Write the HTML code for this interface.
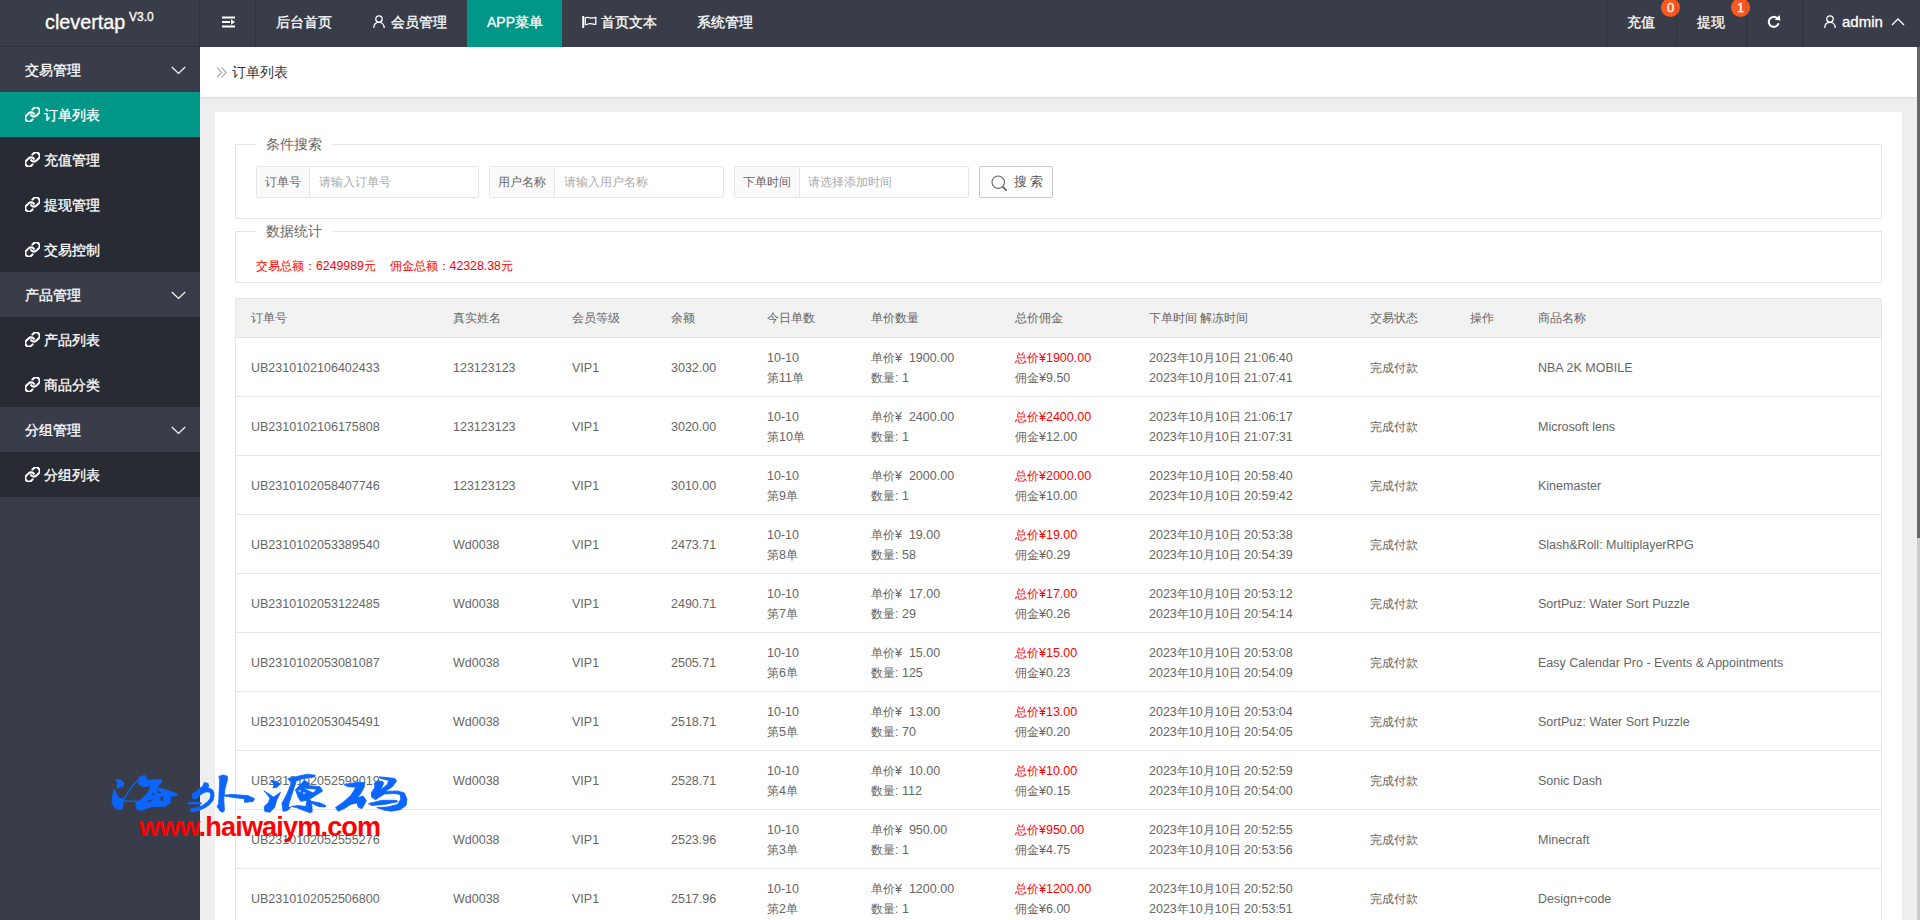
<!DOCTYPE html>
<html><head><meta charset="utf-8">
<style>
*{margin:0;padding:0;box-sizing:border-box}
html,body{width:1920px;height:920px;overflow:hidden;background:#eee;font-family:"Liberation Sans",sans-serif;}
.abs{position:absolute}
svg{display:block}
#hdr{position:absolute;left:0;top:0;width:1920px;height:47px;background:#393D49;color:#fff;font-size:14px;-webkit-text-stroke:0.3px #fff}
#hdr .t{position:absolute;top:0;line-height:45px;white-space:nowrap}
#hdr .sep{position:absolute;top:0;width:1px;height:47px;background:rgba(0,0,0,.15)}
#hdr .ic{position:absolute}
#logo{position:absolute;left:0;top:0;width:200px;height:47px;border-bottom:1px solid #30343e}
#logo .n{position:absolute;left:45px;top:8.5px;font-size:19.8px;line-height:26px;color:#fff}
#logo .v{position:absolute;left:129px;top:10px;font-size:12px;line-height:14px;color:#fff}
.badge{position:absolute;top:-2px;width:19px;height:19px;border-radius:50%;background:#FF5722;color:#fff;font-size:13px;line-height:20.5px;text-align:center}
#side{position:absolute;left:0;top:47px;width:200px;height:873px;background:#393D49;color:#fff;font-size:14px;-webkit-text-stroke:0.3px #fff}
#side .g{position:absolute;left:0;width:200px;height:45px;line-height:46px;padding-left:25px}
#side .c{position:absolute;left:0;width:200px;height:45px;line-height:47px;padding-left:44px;background:#282B33}
#side .on{background:#009688}
#side .lk{position:absolute;left:24.5px;top:14.5px}
#side .chev{position:absolute;left:170.5px;top:19px}
#crumb{position:absolute;left:200px;top:47px;width:1717px;height:50px;background:#fff;box-shadow:0 1px 2px rgba(0,0,0,.10)}
#crumb .t{position:absolute;left:32px;top:0;line-height:50px;font-size:14px;color:#333}
#crumb .ic{position:absolute;left:15.5px;top:20px}
#card{position:absolute;left:215px;top:112px;width:1687px;height:820px;background:#fff;box-shadow:0 1px 2px 0 rgba(0,0,0,.05)}
.fs{position:absolute;border:1px solid #e6e6e6}
.lg{position:absolute;background:#fff;padding:0 10px;font-size:14px;color:#666;line-height:20px}
.ig{position:absolute;height:32px;border:1px solid #e6e6e6;border-radius:2px;background:#fff}
.ig .lb{position:absolute;left:0;top:0;height:30px;background:#fafafa;border-right:1px solid #e6e6e6;font-size:12px;color:#666;line-height:31px;padding-left:8px}
.ig .ph{position:absolute;top:0;line-height:31px;font-size:12px;color:#aaa}
.btn{position:absolute;left:979px;top:166px;width:74px;height:32px;border:1px solid #c9c9c9;border-radius:2px;background:#fff;font-size:12.5px;color:#555}
.red{color:#f00}
.th{position:absolute;background:#f2f2f2;border-top:1px solid #e6e6e6;border-bottom:1px solid #e6e6e6}
.tc{position:absolute;font-size:12.5px;line-height:20px;color:#666;white-space:nowrap}
.z{font-size:12px}
#sb{position:absolute;left:1917px;top:47px;width:3px;height:873px;background:#cbcbcb}
#sbt{position:absolute;left:1917px;top:47px;width:3px;height:491px;background:#666}
#wm1{position:absolute;left:139px;top:810px;font-size:27px;letter-spacing:-0.8px;font-weight:bold;color:#f00;line-height:34px;white-space:nowrap}
</style></head>
<body>
<div id="hdr">
  <div id="logo"><div class="n">clevertap</div><div class="v">V3.0</div></div>
  <div class="sep" style="left:199px"></div>
  <div class="ic" style="left:222px;top:16px"><svg width="14" height="12" viewBox="0 0 14 12"><g fill="#fff"><rect x="0" y="0.5" width="13" height="2"/><rect x="0" y="5" width="8" height="2"/><path d="M9 3.3 L13 6 L9 8.7 Z"/><rect x="0" y="9.5" width="13" height="2"/></g></svg></div>
  <div class="sep" style="left:255px"></div>
  <div class="t" style="left:276px">后台首页</div>
  <div class="ic" style="left:373px;top:15px"><svg width="12" height="13" viewBox="0 0 12 13"><g fill="none" stroke="#fff" stroke-width="1.3"><circle cx="6" cy="4" r="3.2"/><path d="M0.8 13 C0.8 9.5 3 7.4 6 7.4 C9 7.4 11.2 9.5 11.2 13"/></g></svg></div>
  <div class="t" style="left:391px">会员管理</div>
  <div class="abs" style="left:467px;top:0;width:95px;height:47px;background:#009688"></div>
  <div class="t" style="left:487px">APP菜单</div>
  <div class="ic" style="left:582px;top:16px"><svg width="15" height="12" viewBox="0 0 15 12"><g fill="none" stroke="#fff"><path d="M1.2 0 V12" stroke-width="2"/><path d="M3.3 1.8 C6 0.2 8 3 10.5 1.8 L13.8 1.4 V8.2 C11 9.2 8.5 6.5 6 8 C5 8.6 4 8.6 3.3 8.6 Z" stroke-width="1.3"/></g></svg></div>
  <div class="t" style="left:601px">首页文本</div>
  <div class="t" style="left:697px">系统管理</div>
  <div class="sep" style="left:1606px"></div>
  <div class="t" style="left:1627px">充值</div>
  <div class="badge" style="left:1661px">0</div>
  <div class="sep" style="left:1676px"></div>
  <div class="t" style="left:1697px">提现</div>
  <div class="badge" style="left:1731px">1</div>
  <div class="sep" style="left:1746px"></div>
  <div class="ic" style="left:1767px;top:15px"><svg width="14" height="14" viewBox="0 0 14 14"><g fill="none" stroke="#fff" stroke-width="2"><path d="M11.6 8.2 A5 5 0 1 1 10.2 3.2"/></g><path d="M7.6 4.8 L13.4 5.6 L12.6 0 Z" fill="#fff"/></svg></div>
  <div class="sep" style="left:1802px"></div>
  <div class="ic" style="left:1824px;top:15px"><svg width="12" height="13" viewBox="0 0 12 13"><g fill="none" stroke="#fff" stroke-width="1.3"><circle cx="6" cy="4" r="3.2"/><path d="M0.8 13 C0.8 9.5 3 7.4 6 7.4 C9 7.4 11.2 9.5 11.2 13"/></g></svg></div>
  <div class="t" style="left:1842px;top:-1px;font-size:15px">admin</div>
  <div class="ic" style="left:1891px;top:18px"><svg width="14" height="8" viewBox="0 0 14 8"><path d="M1 7 L7 1 L13 7" fill="none" stroke="#fff" stroke-width="1.3"/></svg></div>
</div>
<div id="side">
<div class="g" style="top:0px">交易管理<span class="chev"><svg width="15" height="9" viewBox="0 0 15 9"><path d="M0.8 1 L7.5 7.5 L14.2 1" fill="none" stroke="#fff" stroke-width="1.15"/></svg></span></div>
<div class="c on" style="top:45px"><span class="lk"><svg width="15" height="15" viewBox="1.5 1.5 21 21"><g fill="none" stroke="#fff" stroke-width="2.9" stroke-linecap="round"><path d="M10 13a5 5 0 0 0 7.54.54l3-3a5 5 0 0 0-7.07-7.07l-1.72 1.71"/><path d="M14 11a5 5 0 0 0-7.54-.54l-3 3a5 5 0 0 0 7.07 7.07l1.71-1.71"/></g></svg></span>订单列表</div>
<div class="c" style="top:90px"><span class="lk"><svg width="15" height="15" viewBox="1.5 1.5 21 21"><g fill="none" stroke="#fff" stroke-width="2.9" stroke-linecap="round"><path d="M10 13a5 5 0 0 0 7.54.54l3-3a5 5 0 0 0-7.07-7.07l-1.72 1.71"/><path d="M14 11a5 5 0 0 0-7.54-.54l-3 3a5 5 0 0 0 7.07 7.07l1.71-1.71"/></g></svg></span>充值管理</div>
<div class="c" style="top:135px"><span class="lk"><svg width="15" height="15" viewBox="1.5 1.5 21 21"><g fill="none" stroke="#fff" stroke-width="2.9" stroke-linecap="round"><path d="M10 13a5 5 0 0 0 7.54.54l3-3a5 5 0 0 0-7.07-7.07l-1.72 1.71"/><path d="M14 11a5 5 0 0 0-7.54-.54l-3 3a5 5 0 0 0 7.07 7.07l1.71-1.71"/></g></svg></span>提现管理</div>
<div class="c" style="top:180px"><span class="lk"><svg width="15" height="15" viewBox="1.5 1.5 21 21"><g fill="none" stroke="#fff" stroke-width="2.9" stroke-linecap="round"><path d="M10 13a5 5 0 0 0 7.54.54l3-3a5 5 0 0 0-7.07-7.07l-1.72 1.71"/><path d="M14 11a5 5 0 0 0-7.54-.54l-3 3a5 5 0 0 0 7.07 7.07l1.71-1.71"/></g></svg></span>交易控制</div>
<div class="g" style="top:225px">产品管理<span class="chev"><svg width="15" height="9" viewBox="0 0 15 9"><path d="M0.8 1 L7.5 7.5 L14.2 1" fill="none" stroke="#fff" stroke-width="1.15"/></svg></span></div>
<div class="c" style="top:270px"><span class="lk"><svg width="15" height="15" viewBox="1.5 1.5 21 21"><g fill="none" stroke="#fff" stroke-width="2.9" stroke-linecap="round"><path d="M10 13a5 5 0 0 0 7.54.54l3-3a5 5 0 0 0-7.07-7.07l-1.72 1.71"/><path d="M14 11a5 5 0 0 0-7.54-.54l-3 3a5 5 0 0 0 7.07 7.07l1.71-1.71"/></g></svg></span>产品列表</div>
<div class="c" style="top:315px"><span class="lk"><svg width="15" height="15" viewBox="1.5 1.5 21 21"><g fill="none" stroke="#fff" stroke-width="2.9" stroke-linecap="round"><path d="M10 13a5 5 0 0 0 7.54.54l3-3a5 5 0 0 0-7.07-7.07l-1.72 1.71"/><path d="M14 11a5 5 0 0 0-7.54-.54l-3 3a5 5 0 0 0 7.07 7.07l1.71-1.71"/></g></svg></span>商品分类</div>
<div class="g" style="top:360px">分组管理<span class="chev"><svg width="15" height="9" viewBox="0 0 15 9"><path d="M0.8 1 L7.5 7.5 L14.2 1" fill="none" stroke="#fff" stroke-width="1.15"/></svg></span></div>
<div class="c" style="top:405px"><span class="lk"><svg width="15" height="15" viewBox="1.5 1.5 21 21"><g fill="none" stroke="#fff" stroke-width="2.9" stroke-linecap="round"><path d="M10 13a5 5 0 0 0 7.54.54l3-3a5 5 0 0 0-7.07-7.07l-1.72 1.71"/><path d="M14 11a5 5 0 0 0-7.54-.54l-3 3a5 5 0 0 0 7.07 7.07l1.71-1.71"/></g></svg></span>分组列表</div>
</div>
<div id="crumb">
  <div class="ic"><svg width="12" height="11" viewBox="0 0 12 11"><g fill="none" stroke="#999" stroke-width="1.1"><path d="M1 0.5 L5.5 5.5 L1 10.5"/><path d="M5.5 0.5 L10 5.5 L5.5 10.5"/></g></svg></div>
  <div class="t">订单列表</div>
</div>
<div id="card"></div>
<!-- search fieldset -->
<div class="fs" style="left:235px;top:144px;width:1647px;height:75px"></div>
<div class="lg" style="left:256px;top:134px">条件搜索</div>
<div class="ig" style="left:256px;top:166px;width:223px"><div class="lb" style="width:53px">订单号</div><div class="ph" style="left:62px">请输入订单号</div></div>
<div class="ig" style="left:489px;top:166px;width:235px"><div class="lb" style="width:65px">用户名称</div><div class="ph" style="left:74px">请输入用户名称</div></div>
<div class="ig" style="left:734px;top:166px;width:235px"><div class="lb" style="width:65px">下单时间</div><div class="ph" style="left:73px">请选择添加时间</div></div>
<div class="btn"><div class="abs" style="left:11px;top:8px"><svg width="17" height="17" viewBox="0 0 17 17"><g fill="none" stroke="#666" stroke-width="1.1"><circle cx="7.2" cy="7.2" r="6.2"/><path d="M11.8 11.8 L15.2 15.2" stroke-width="1.7" stroke-linecap="round"/></g></svg></div><div class="abs" style="left:34px;top:0;line-height:31px">搜&nbsp;索</div></div>
<!-- stats fieldset -->
<div class="fs" style="left:235px;top:231px;width:1647px;height:52px"></div>
<div class="lg" style="left:256px;top:221px">数据统计</div>
<div class="abs red" style="left:256px;top:255.5px;font-size:12.3px;line-height:20px;white-space:nowrap">交易总额：6249989元&nbsp;&nbsp;&nbsp;&nbsp;佣金总额：42328.38元</div>
<!-- table -->
<div class="th" style="left:235px;top:298px;width:1647px;height:40px"></div>
<div class="tc" style="left:251px;top:308px"><span class="z">订单号</span></div>
<div class="tc" style="left:453px;top:308px"><span class="z">真实姓名</span></div>
<div class="tc" style="left:572px;top:308px"><span class="z">会员等级</span></div>
<div class="tc" style="left:671px;top:308px"><span class="z">余额</span></div>
<div class="tc" style="left:767px;top:308px"><span class="z">今日单数</span></div>
<div class="tc" style="left:871px;top:308px"><span class="z">单价数量</span></div>
<div class="tc" style="left:1015px;top:308px"><span class="z">总价佣金</span></div>
<div class="tc" style="left:1149px;top:308px"><span class="z">下单时间</span> <span class="z">解冻时间</span></div>
<div class="tc" style="left:1370px;top:308px"><span class="z">交易状态</span></div>
<div class="tc" style="left:1470px;top:308px"><span class="z">操作</span></div>
<div class="tc" style="left:1538px;top:308px"><span class="z">商品名称</span></div>
<div class="abs" style="left:235px;top:298px;width:1px;height:640px;background:#e6e6e6"></div>
<div class="abs" style="left:1881px;top:298px;width:1px;height:640px;background:#e6e6e6"></div>
<div class="abs" style="left:235px;top:396px;width:1647px;height:1px;background:#e6e6e6"></div>
<div class="tc" style="left:251px;top:358px">UB2310102106402433</div>
<div class="tc" style="left:453px;top:358px">123123123</div>
<div class="tc" style="left:572px;top:358px">VIP1</div>
<div class="tc" style="left:671px;top:358px">3032.00</div>
<div class="tc" style="left:767px;top:348px">10-10<br><span class="z">第</span>11<span class="z">单</span></div>
<div class="tc" style="left:871px;top:348px"><span class="z">单价</span>¥&nbsp; 1900.00<br><span class="z">数量</span>: 1</div>
<div class="tc" style="left:1015px;top:348px"><span class="red"><span class="z">总价</span>¥1900.00</span><br><span class="z">佣金</span>¥9.50</div>
<div class="tc" style="left:1149px;top:348px">2023<span class="z">年</span>10<span class="z">月</span>10<span class="z">日</span> 21:06:40<br>2023<span class="z">年</span>10<span class="z">月</span>10<span class="z">日</span> 21:07:41</div>
<div class="tc" style="left:1370px;top:358px"><span class="z">完成付款</span></div>
<div class="tc" style="left:1538px;top:358px">NBA 2K MOBILE</div>
<div class="abs" style="left:235px;top:455px;width:1647px;height:1px;background:#e6e6e6"></div>
<div class="tc" style="left:251px;top:417px">UB2310102106175808</div>
<div class="tc" style="left:453px;top:417px">123123123</div>
<div class="tc" style="left:572px;top:417px">VIP1</div>
<div class="tc" style="left:671px;top:417px">3020.00</div>
<div class="tc" style="left:767px;top:407px">10-10<br><span class="z">第</span>10<span class="z">单</span></div>
<div class="tc" style="left:871px;top:407px"><span class="z">单价</span>¥&nbsp; 2400.00<br><span class="z">数量</span>: 1</div>
<div class="tc" style="left:1015px;top:407px"><span class="red"><span class="z">总价</span>¥2400.00</span><br><span class="z">佣金</span>¥12.00</div>
<div class="tc" style="left:1149px;top:407px">2023<span class="z">年</span>10<span class="z">月</span>10<span class="z">日</span> 21:06:17<br>2023<span class="z">年</span>10<span class="z">月</span>10<span class="z">日</span> 21:07:31</div>
<div class="tc" style="left:1370px;top:417px"><span class="z">完成付款</span></div>
<div class="tc" style="left:1538px;top:417px">Microsoft lens</div>
<div class="abs" style="left:235px;top:514px;width:1647px;height:1px;background:#e6e6e6"></div>
<div class="tc" style="left:251px;top:476px">UB2310102058407746</div>
<div class="tc" style="left:453px;top:476px">123123123</div>
<div class="tc" style="left:572px;top:476px">VIP1</div>
<div class="tc" style="left:671px;top:476px">3010.00</div>
<div class="tc" style="left:767px;top:466px">10-10<br><span class="z">第</span>9<span class="z">单</span></div>
<div class="tc" style="left:871px;top:466px"><span class="z">单价</span>¥&nbsp; 2000.00<br><span class="z">数量</span>: 1</div>
<div class="tc" style="left:1015px;top:466px"><span class="red"><span class="z">总价</span>¥2000.00</span><br><span class="z">佣金</span>¥10.00</div>
<div class="tc" style="left:1149px;top:466px">2023<span class="z">年</span>10<span class="z">月</span>10<span class="z">日</span> 20:58:40<br>2023<span class="z">年</span>10<span class="z">月</span>10<span class="z">日</span> 20:59:42</div>
<div class="tc" style="left:1370px;top:476px"><span class="z">完成付款</span></div>
<div class="tc" style="left:1538px;top:476px">Kinemaster</div>
<div class="abs" style="left:235px;top:573px;width:1647px;height:1px;background:#e6e6e6"></div>
<div class="tc" style="left:251px;top:535px">UB2310102053389540</div>
<div class="tc" style="left:453px;top:535px">Wd0038</div>
<div class="tc" style="left:572px;top:535px">VIP1</div>
<div class="tc" style="left:671px;top:535px">2473.71</div>
<div class="tc" style="left:767px;top:525px">10-10<br><span class="z">第</span>8<span class="z">单</span></div>
<div class="tc" style="left:871px;top:525px"><span class="z">单价</span>¥&nbsp; 19.00<br><span class="z">数量</span>: 58</div>
<div class="tc" style="left:1015px;top:525px"><span class="red"><span class="z">总价</span>¥19.00</span><br><span class="z">佣金</span>¥0.29</div>
<div class="tc" style="left:1149px;top:525px">2023<span class="z">年</span>10<span class="z">月</span>10<span class="z">日</span> 20:53:38<br>2023<span class="z">年</span>10<span class="z">月</span>10<span class="z">日</span> 20:54:39</div>
<div class="tc" style="left:1370px;top:535px"><span class="z">完成付款</span></div>
<div class="tc" style="left:1538px;top:535px">Slash&amp;Roll: MultiplayerRPG</div>
<div class="abs" style="left:235px;top:632px;width:1647px;height:1px;background:#e6e6e6"></div>
<div class="tc" style="left:251px;top:594px">UB2310102053122485</div>
<div class="tc" style="left:453px;top:594px">Wd0038</div>
<div class="tc" style="left:572px;top:594px">VIP1</div>
<div class="tc" style="left:671px;top:594px">2490.71</div>
<div class="tc" style="left:767px;top:584px">10-10<br><span class="z">第</span>7<span class="z">单</span></div>
<div class="tc" style="left:871px;top:584px"><span class="z">单价</span>¥&nbsp; 17.00<br><span class="z">数量</span>: 29</div>
<div class="tc" style="left:1015px;top:584px"><span class="red"><span class="z">总价</span>¥17.00</span><br><span class="z">佣金</span>¥0.26</div>
<div class="tc" style="left:1149px;top:584px">2023<span class="z">年</span>10<span class="z">月</span>10<span class="z">日</span> 20:53:12<br>2023<span class="z">年</span>10<span class="z">月</span>10<span class="z">日</span> 20:54:14</div>
<div class="tc" style="left:1370px;top:594px"><span class="z">完成付款</span></div>
<div class="tc" style="left:1538px;top:594px">SortPuz: Water Sort Puzzle</div>
<div class="abs" style="left:235px;top:691px;width:1647px;height:1px;background:#e6e6e6"></div>
<div class="tc" style="left:251px;top:653px">UB2310102053081087</div>
<div class="tc" style="left:453px;top:653px">Wd0038</div>
<div class="tc" style="left:572px;top:653px">VIP1</div>
<div class="tc" style="left:671px;top:653px">2505.71</div>
<div class="tc" style="left:767px;top:643px">10-10<br><span class="z">第</span>6<span class="z">单</span></div>
<div class="tc" style="left:871px;top:643px"><span class="z">单价</span>¥&nbsp; 15.00<br><span class="z">数量</span>: 125</div>
<div class="tc" style="left:1015px;top:643px"><span class="red"><span class="z">总价</span>¥15.00</span><br><span class="z">佣金</span>¥0.23</div>
<div class="tc" style="left:1149px;top:643px">2023<span class="z">年</span>10<span class="z">月</span>10<span class="z">日</span> 20:53:08<br>2023<span class="z">年</span>10<span class="z">月</span>10<span class="z">日</span> 20:54:09</div>
<div class="tc" style="left:1370px;top:653px"><span class="z">完成付款</span></div>
<div class="tc" style="left:1538px;top:653px">Easy Calendar Pro - Events &amp; Appointments</div>
<div class="abs" style="left:235px;top:750px;width:1647px;height:1px;background:#e6e6e6"></div>
<div class="tc" style="left:251px;top:712px">UB2310102053045491</div>
<div class="tc" style="left:453px;top:712px">Wd0038</div>
<div class="tc" style="left:572px;top:712px">VIP1</div>
<div class="tc" style="left:671px;top:712px">2518.71</div>
<div class="tc" style="left:767px;top:702px">10-10<br><span class="z">第</span>5<span class="z">单</span></div>
<div class="tc" style="left:871px;top:702px"><span class="z">单价</span>¥&nbsp; 13.00<br><span class="z">数量</span>: 70</div>
<div class="tc" style="left:1015px;top:702px"><span class="red"><span class="z">总价</span>¥13.00</span><br><span class="z">佣金</span>¥0.20</div>
<div class="tc" style="left:1149px;top:702px">2023<span class="z">年</span>10<span class="z">月</span>10<span class="z">日</span> 20:53:04<br>2023<span class="z">年</span>10<span class="z">月</span>10<span class="z">日</span> 20:54:05</div>
<div class="tc" style="left:1370px;top:712px"><span class="z">完成付款</span></div>
<div class="tc" style="left:1538px;top:712px">SortPuz: Water Sort Puzzle</div>
<div class="abs" style="left:235px;top:809px;width:1647px;height:1px;background:#e6e6e6"></div>
<div class="tc" style="left:251px;top:771px">UB2310102052599019</div>
<div class="tc" style="left:453px;top:771px">Wd0038</div>
<div class="tc" style="left:572px;top:771px">VIP1</div>
<div class="tc" style="left:671px;top:771px">2528.71</div>
<div class="tc" style="left:767px;top:761px">10-10<br><span class="z">第</span>4<span class="z">单</span></div>
<div class="tc" style="left:871px;top:761px"><span class="z">单价</span>¥&nbsp; 10.00<br><span class="z">数量</span>: 112</div>
<div class="tc" style="left:1015px;top:761px"><span class="red"><span class="z">总价</span>¥10.00</span><br><span class="z">佣金</span>¥0.15</div>
<div class="tc" style="left:1149px;top:761px">2023<span class="z">年</span>10<span class="z">月</span>10<span class="z">日</span> 20:52:59<br>2023<span class="z">年</span>10<span class="z">月</span>10<span class="z">日</span> 20:54:00</div>
<div class="tc" style="left:1370px;top:771px"><span class="z">完成付款</span></div>
<div class="tc" style="left:1538px;top:771px">Sonic Dash</div>
<div class="abs" style="left:235px;top:868px;width:1647px;height:1px;background:#e6e6e6"></div>
<div class="tc" style="left:251px;top:830px">UB2310102052555276</div>
<div class="tc" style="left:453px;top:830px">Wd0038</div>
<div class="tc" style="left:572px;top:830px">VIP1</div>
<div class="tc" style="left:671px;top:830px">2523.96</div>
<div class="tc" style="left:767px;top:820px">10-10<br><span class="z">第</span>3<span class="z">单</span></div>
<div class="tc" style="left:871px;top:820px"><span class="z">单价</span>¥&nbsp; 950.00<br><span class="z">数量</span>: 1</div>
<div class="tc" style="left:1015px;top:820px"><span class="red"><span class="z">总价</span>¥950.00</span><br><span class="z">佣金</span>¥4.75</div>
<div class="tc" style="left:1149px;top:820px">2023<span class="z">年</span>10<span class="z">月</span>10<span class="z">日</span> 20:52:55<br>2023<span class="z">年</span>10<span class="z">月</span>10<span class="z">日</span> 20:53:56</div>
<div class="tc" style="left:1370px;top:830px"><span class="z">完成付款</span></div>
<div class="tc" style="left:1538px;top:830px">Minecraft</div>
<div class="abs" style="left:235px;top:927px;width:1647px;height:1px;background:#e6e6e6"></div>
<div class="tc" style="left:251px;top:889px">UB2310102052506800</div>
<div class="tc" style="left:453px;top:889px">Wd0038</div>
<div class="tc" style="left:572px;top:889px">VIP1</div>
<div class="tc" style="left:671px;top:889px">2517.96</div>
<div class="tc" style="left:767px;top:879px">10-10<br><span class="z">第</span>2<span class="z">单</span></div>
<div class="tc" style="left:871px;top:879px"><span class="z">单价</span>¥&nbsp; 1200.00<br><span class="z">数量</span>: 1</div>
<div class="tc" style="left:1015px;top:879px"><span class="red"><span class="z">总价</span>¥1200.00</span><br><span class="z">佣金</span>¥6.00</div>
<div class="tc" style="left:1149px;top:879px">2023<span class="z">年</span>10<span class="z">月</span>10<span class="z">日</span> 20:52:50<br>2023<span class="z">年</span>10<span class="z">月</span>10<span class="z">日</span> 20:53:51</div>
<div class="tc" style="left:1370px;top:889px"><span class="z">完成付款</span></div>
<div class="tc" style="left:1538px;top:889px">Design+code</div>
<div id="sb"></div><div id="sbt"></div>
<!-- watermark -->
<svg class="abs" style="left:100px;top:765px" width="320" height="60" viewBox="100 765 320 60"><g fill="#0a66ff" stroke="#0a66ff" stroke-width="0.8" stroke-linejoin="round" stroke-linecap="round" fill-rule="evenodd"><path d="M116.2 779.4 L120.7 779.9 L124.1 783.0 L122.7 786.7 L116.7 788.0 L117.5 784.1Z"/><path d="M114.4 789.8 L119.1 798.7 L123.3 798.4 L123.0 806.5 L121.2 809.7 L115.4 808.9 L112.0 802.4 L112.8 794.5Z"/><path d="M139.4 777.3 L144.7 775.2 L146.8 778.9 L146.2 779.9 L161.4 779.7 L162.4 781.5 L156.7 787.2 L169.2 790.9 L177.5 794.0 L176.5 795.8 L170.8 796.4 L170.0 803.4 L164.5 806.5 L152.0 806.5 L141.5 810.4 L136.3 808.9 L135.8 802.4 L141.5 799.2 L147.8 793.0 L150.9 785.7 L142.6 786.7 L138.9 784.1ZM150.4 795.6 L153.5 791.9 L154.6 795.6ZM145.2 802.9 L149.4 799.7 L153.5 799.0 L153.0 800.8 L146.8 803.1ZM159.8 797.1 L164.0 796.1 L163.5 801.3 L160.8 801.3ZM155.6 790.1 L162.9 792.4 L159.3 793.7Z"/><path d="M204.5 782.5 L208.2 783.6 L208.7 786.7 L207.1 788.8 L200.9 793.0 L195.7 799.2 L192.5 798.2 L192.5 793.5 L195.7 791.9 L203.0 785.7Z"/><path d="M219.1 776.3 L223.3 775.0 L227.5 776.3 L227.5 779.4 L224.9 789.3 L223.8 799.2 L224.4 810.7 L222.8 812.3 L220.2 811.2 L217.1 806.5 L218.6 803.9 L219.7 780.4Z"/><path d="M224.4 795.1 L232.2 794.5 L247.9 795.6 L254.6 798.7 L253.1 801.3 L244.7 802.4 L244.2 798.7 L234.8 797.7 L224.9 796.1Z"/><path d="M271.0 780.4 L277.2 781.5 L280.1 784.1 L277.2 787.2 L273.0 788.0 L274.1 784.6Z"/><path d="M264.2 790.9 L273.6 797.1 L280.6 792.2 L276.7 800.3 L274.6 807.6 L269.9 812.3 L264.7 811.2 L264.2 806.5 L268.4 802.4 L269.9 798.2Z"/><path d="M288.2 778.4 L307.0 774.2 L315.3 775.2 L314.3 776.8 L301.8 778.9 L293.9 782.0 L289.2 780.4Z"/><path d="M292.4 781.0 L296.0 782.0 L291.3 796.1 L288.2 806.5 L290.8 807.6 L287.1 810.7 L283.0 811.2 L281.9 803.4 L287.1 793.5Z"/><path d="M295.5 789.8 L304.4 780.4 L309.6 783.6 L309.1 785.7 L320.0 786.7 L322.6 790.9 L314.8 796.1 L309.6 799.2 L311.7 802.4 L312.2 811.8 L310.1 812.8 L301.8 809.7 L296.5 807.6 L291.3 806.5 L297.6 805.5 L305.9 806.5 L307.0 800.3 L300.7 801.3 L298.1 797.1 L296.5 792.4ZM296.5 790.4 L301.2 789.8 L300.7 792.4ZM302.3 791.9 L307.0 792.4 L303.8 794.5ZM303.3 788.0 L316.9 789.3 L313.2 793.0 L308.0 790.6Z"/><path d="M311.1 801.3 L320.0 802.9 L325.8 805.5 L325.2 807.1 L318.5 806.5 L312.2 803.4Z"/><path d="M344.4 784.6 L355.9 782.5 L364.7 782.5 L364.2 787.2 L360.1 794.5 L356.9 797.7 L363.2 796.1 L366.3 800.8 L362.1 808.6 L358.5 807.6 L356.9 802.9 L350.7 804.4 L344.4 808.6 L338.1 811.2 L335.5 807.6 L342.8 802.4 L350.7 795.6 L355.9 787.2 L348.0 786.7Z"/><path d="M379.4 776.8 L395.0 778.4 L396.6 781.0 L392.4 786.7 L385.1 791.4 L397.6 790.9 L404.4 793.0 L407.0 799.2 L406.0 805.5 L400.2 809.7 L391.4 811.2 L384.6 810.2 L376.8 807.6 L387.2 807.1 L397.6 804.4 L400.8 799.2 L400.2 794.5 L395.0 793.5 L384.6 794.0 L379.4 797.1 L375.7 799.7 L371.5 797.1 L371.5 792.4 L374.7 787.7 L374.7 783.0 L377.8 781.0 L383.0 781.5 L383.5 783.6 L380.9 789.8 L387.2 784.6 L388.8 780.4 L380.4 778.4Z"/><path d="M368.9 803.4 L382.0 800.3 L396.6 800.3 L397.6 801.8 L384.6 804.4 L371.5 805.5Z"/><path d="M123.3 800.3 Q131 786 141.5 776.8" fill="none" stroke-width="1.3"/><path d="M123.3 800.8 L137.9 801.3" fill="none" stroke-width="1.3"/><path d="M196.5 796.5 Q202 789.8 208.5 790.2 Q214.2 791 211.5 799.5 Q206 808.2 192.3 810.2" fill="none" stroke-width="4.2"/><path d="M189 803.4 Q195 802.6 200.6 803.4" fill="none" stroke-width="2.4"/></g></svg>
<div id="wm1">www.haiwaiym.com</div>
</body></html>
